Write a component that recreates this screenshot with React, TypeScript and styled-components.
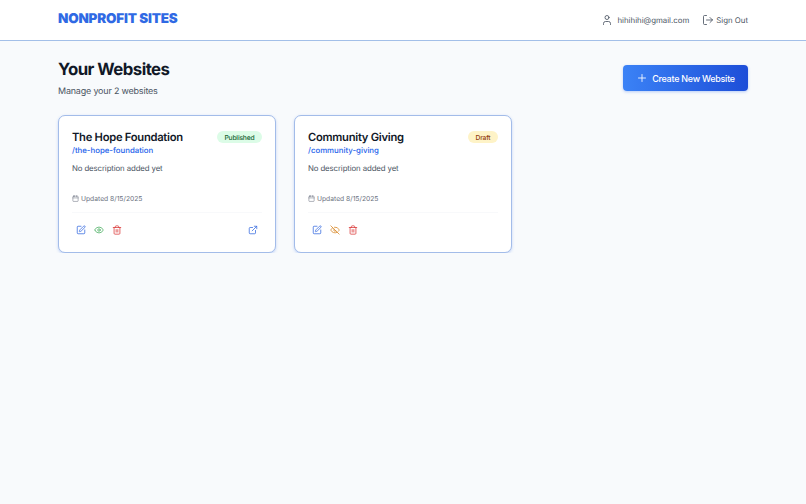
import React from "react"
import styled, { createGlobalStyle } from "styled-components"
import {
  Calendar,
  EyeIcon,
  EyeOff,
  ExternalLink,
  LogOut,
  Plus,
  SquarePen,
  Trash2,
  User,
} from "lucide-react"

const sites = [
  {
    name: "The Hope Foundation",
    slug: "/the-hope-foundation",
    updated: "8/15/2025",
    published: true,
  },
  {
    name: "Community Giving",
    slug: "/community-giving",
    updated: "8/15/2025",
    published: false,
  },
]

export default function App() {
  return (
    <>
      <GlobalStyle />
      <Header>
        <Logo>NONPROFIT SITES</Logo>
        <UserArea>
          <UserInfo>
            <User size={12} strokeWidth={1.7} />
            <span>hihihihi@gmail.com</span>
          </UserInfo>
          <SignOut>
            <LogOut size={12} strokeWidth={1.7} />
            <span>Sign Out</span>
          </SignOut>
        </UserArea>
      </Header>
      <Main>
        <TopRow>
          <div>
            <Title>Your Websites</Title>
            <Subtitle>Manage your 2 websites</Subtitle>
          </div>
          <CreateButton>
            <Plus size={12} strokeWidth={1.7} />
            Create New Website
          </CreateButton>
        </TopRow>
        <CardGrid>
          {sites.map(site => (
            <Card key={site.slug}>
              <CardHead>
                <SiteName>{site.name}</SiteName>
                <Badge $published={site.published}>
                  {site.published ? "Published" : "Draft"}
                </Badge>
              </CardHead>
              <Slug>{site.slug}</Slug>
              <Description>No description added yet</Description>
              <Updated>
                <Calendar size={7} strokeWidth={1.8} />
                Updated {site.updated}
              </Updated>
              <Actions>
                <ActionGroup>
                  <ActionIcon $color="#3b6fe0">
                    <SquarePen size={10} strokeWidth={1.9} />
                  </ActionIcon>
                  <ActionIcon $color={site.published ? "#4caf63" : "#d98a2b"}>
                    {site.published ? (
                      <EyeIcon size={10} strokeWidth={1.9} />
                    ) : (
                      <EyeOff size={10} strokeWidth={1.9} />
                    )}
                  </ActionIcon>
                  <ActionIcon $color="#dc3f3f">
                    <Trash2 size={10} strokeWidth={1.9} />
                  </ActionIcon>
                </ActionGroup>
                {site.published && (
                  <ActionIcon $color="#3b6fe0">
                    <ExternalLink size={10} strokeWidth={1.9} />
                  </ActionIcon>
                )}
              </Actions>
            </Card>
          ))}
        </CardGrid>
      </Main>
    </>
  )
}

const GlobalStyle = createGlobalStyle`
  html, body {
    margin: 0;
    min-height: 100%;
    background: #f8fafc;
    font-family: Inter, "Liberation Sans", sans-serif;
    text-rendering: geometricPrecision;
  }
  * {
    box-sizing: border-box;
  }
`

const Header = styled.header`
  height: 41px;
  padding: 0 58px;
  display: flex;
  align-items: center;
  justify-content: space-between;
  background: #fff;
  border-bottom: 1px solid #a3bfe8;
`

const Logo = styled.div`
  font-size: 13.44px;
  letter-spacing: -0.18px;
  font-weight: 900;
  color: #2f69e4;
  margin-top: -3px;
`

const UserArea = styled.div`
  display: flex;
  align-items: center;
  gap: 13px;
  font-size: 7.84px;
  color: #4b5563;
`

const UserInfo = styled.div`
  display: flex;
  align-items: center;
  gap: 4px;
`

const SignOut = styled.div`
  display: flex;
  align-items: center;
  gap: 2px;
`

const Main = styled.main`
  padding: 19px 58px 0;
`

const TopRow = styled.div`
  display: flex;
  justify-content: space-between;
  align-items: flex-start;
`

const Title = styled.h1`
  margin: 0;
  font-size: 16.8px;
  letter-spacing: -0.54px;
  line-height: 21px;
  font-weight: 700;
  color: #111827;
`

const Subtitle = styled.p`
  margin: 4px 0 0;
  font-size: 8.96px;
  letter-spacing: -0.18px;
  line-height: 14px;
  color: #4b5563;
`

const CreateButton = styled.button`
  width: 125px;
  height: 26px;
  margin-top: 5px;
  padding: 0;
  display: flex;
  align-items: center;
  justify-content: center;
  gap: 4px;
  border: none;
  border-radius: 4px;
  background: linear-gradient(90deg, #3b82f6, #1d4ed8);
  box-shadow: 0 1px 3px rgba(37, 99, 235, 0.3);
  color: #fff;
  font-family: inherit;
  font-size: 8.96px;
  letter-spacing: -0.25px;
  font-weight: 500;
`

const CardGrid = styled.div`
  margin-top: 16px;
  display: grid;
  grid-template-columns: 218px 218px;
  gap: 18px;
`

const Card = styled.article`
  height: 138px;
  padding: 14px 13px;
  background: #fff;
  border: 1px solid #a3bce9;
  border-radius: 7px;
  box-shadow: 0 1px 3px rgba(37, 99, 235, 0.25);
`

const CardHead = styled.div`
  display: flex;
  justify-content: space-between;
  align-items: center;
`

const SiteName = styled.h3`
  margin: 0;
  font-size: 11.2px;
  letter-spacing: -0.27px;
  line-height: 14px;
  font-weight: 600;
  color: #111827;
`

const Badge = styled.span<{ $published: boolean }>`
  height: 12px;
  padding: 0 7.5px;
  display: flex;
  align-items: center;
  border-radius: 6px;
  font-size: 6.72px;
  letter-spacing: -0.17px;
  font-weight: 500;
  background: ${p => (p.$published ? "#dcfce7" : "#fef3c7")};
  color: ${p => (p.$published ? "#166534" : "#92400e")};
`

const Slug = styled.div`
  font-size: 7.84px;
  line-height: 12px;
  font-weight: 500;
  color: #2563eb;
`

const Description = styled.p`
  margin: 5.5px 0 0;
  font-size: 7.84px;
  letter-spacing: -0.12px;
  line-height: 12px;
  color: #4b5563;
`

const Updated = styled.div`
  margin-top: 20px;
  display: flex;
  align-items: center;
  gap: 2px;
  font-size: 6.72px;
  line-height: 10px;
  color: #6b7280;
`

const Actions = styled.div`
  margin-top: 8px;
  padding: 12px 1px 0;
  display: flex;
  justify-content: space-between;
  align-items: center;
  border-top: 1px solid #f8f9fb;
`

const ActionGroup = styled.div`
  display: flex;
  gap: 2px;
`

const ActionIcon = styled.button<{ $color: string }>`
  width: 10px;
  height: 10px;
  margin: 0 3px;
  padding: 0;
  display: flex;
  border: none;
  background: none;
  color: ${p => p.$color};
`
